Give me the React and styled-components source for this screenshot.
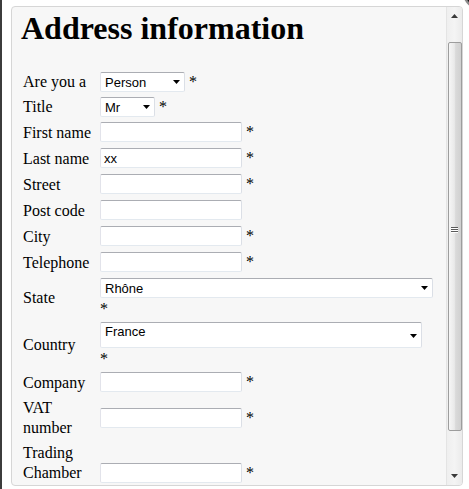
import React from "react";
import styled, { createGlobalStyle } from "styled-components";

const Global = createGlobalStyle`
  html, body {
    margin: 0;
    padding: 0;
    background: #ffffff;
    overflow: hidden;
  }
  body {
    font-family: "Liberation Serif", "Times New Roman", serif;
    color: #000;
  }
`;

const Page = styled.div`
  position: relative;
  width: 469px;
  height: 489px;
  box-sizing: border-box;
  border-left: 2px solid #3c3c3c;
  padding: 6px 0 0 9px;
  overflow: hidden;
`;

const CloseButton = styled.div`
  position: absolute;
  left: 461px;
  top: -25px;
  width: 34px;
  height: 34px;
  box-sizing: border-box;
  border-radius: 50%;
  background: #151515;
  border: 2px solid #8a8a8a;
  box-shadow: 0 0 1px #444;
`;

const Dialog = styled.div`
  display: flex;
  width: 452px;
  height: 480px;
  box-sizing: border-box;
  border: 1px solid #d6d6d6;
  border-radius: 4px;
  background: #f7f7f7;
  overflow: hidden;
`;

const Content = styled.div`
  flex: 1;
  min-width: 0;
  padding: 3px 0 0 9px;
  overflow: hidden;
`;

const Heading = styled.h1`
  margin: 0 0 25px;
  font-size: 32px;
  line-height: 37px;
  font-weight: bold;
  white-space: nowrap;
`;

const Form = styled.div`
  display: flex;
  flex-direction: column;
  gap: 5px;
  padding-left: 2px;
`;

const Row = styled.div`
  display: grid;
  grid-template-columns: 77px 1fr;
  align-items: center;
`;

const Label = styled.div`
  font-size: 16px;
  line-height: 20px;
`;

const Value = styled.div`
  display: flex;
  flex-direction: ${(p) => (p.$stacked ? "column" : "row")};
  align-items: flex-start;
`;

const Required = styled.span`
  font-size: 16px;
  line-height: ${(p) => (p.$below ? "17px" : "16px")};
  margin-top: 2px;
  margin-left: ${(p) => (p.$below ? "0" : "4px")};
`;

const fieldBorder = `
  border: 1px solid;
  border-color: #abadb3 #dbdfe6 #e3e9ef #e2e3ea;
  border-radius: 2px;
  background: #ffffff;
  font-family: "Liberation Sans", Arial, sans-serif;
  font-size: 13px;
  color: #000;
`;

const TextBox = styled.input`
  ${fieldBorder}
  width: 142px;
  height: 20px;
  box-sizing: border-box;
  margin: 0 0 1px;
  padding: 0 3px;
  outline: none;
`;

const SelectBox = styled.div`
  ${fieldBorder}
  display: flex;
  align-items: ${(p) => (p.$tall ? "flex-start" : "center")};
  width: ${(p) => p.$width}px;
  height: ${(p) => (p.$tall ? 26 : 20)}px;
  box-sizing: border-box;
  padding: ${(p) => (p.$tall ? "1px" : "0")} 4px 0 4px;
  line-height: 15px;
`;

const SelectText = styled.span`
  flex: 1;
  white-space: nowrap;
  overflow: hidden;
`;

const Arrow = styled.svg`
  align-self: center;
  flex: none;
  width: 7px;
  height: 4px;
`;

const ScrollBar = styled.div`
  display: flex;
  flex-direction: column;
  align-items: center;
  width: 16px;
  flex: none;
  box-sizing: border-box;
  border-left: 1px solid #e4e4e4;
  background: linear-gradient(to right, #efefef, #f4f4f4 50%, #ebebeb);
`;

const ScrollArrow = styled.div`
  height: 35px;
  display: flex;
  align-items: ${(p) => (p.$down ? "flex-end" : "flex-start")};
  padding: ${(p) => (p.$down ? "0 0 7px" : "7px 0 0")};
  box-sizing: border-box;
`;

const Thumb = styled.div`
  flex: 1;
  width: 14px;
  margin: 0 0 19px;
  box-sizing: border-box;
  border: 1px solid #9d9d9d;
  border-radius: 2px;
  background: linear-gradient(to right, #f6f6f6, #e9e9e9 45%, #dadada 55%, #d0d0d0);
  display: flex;
  align-items: center;
  justify-content: center;
`;

const Grip = styled.div`
  display: flex;
  flex-direction: column;
  gap: 1px;
  margin-bottom: 14px;
  & > span {
    display: block;
    width: 7px;
    height: 1px;
    background: #5a5a5a;
    box-shadow: 0 1px 0 #ffffff;
  }
`;

function DownArrow() {
  return (
    <Arrow viewBox="0 0 7 4">
      <polygon points="0,0 7,0 3.5,4" fill="#000" />
    </Arrow>
  );
}

function Select({ width, value, tall }) {
  return (
    <SelectBox $width={width} $tall={tall}>
      <SelectText>{value}</SelectText>
      <DownArrow />
    </SelectBox>
  );
}

function Star({ below }) {
  return <Required $below={below}>*</Required>;
}

const textFields = [
  { label: "First name", value: "", required: true },
  { label: "Last name", value: "xx", required: true },
  { label: "Street", value: "", required: true },
  { label: "Post code", value: "", required: false },
  { label: "City", value: "", required: true },
  { label: "Telephone", value: "", required: true },
];

function TextRow({ label, value, required }) {
  return (
    <Row>
      <Label>{label}</Label>
      <Value>
        <TextBox defaultValue={value} readOnly />
        {required && <Star />}
      </Value>
    </Row>
  );
}

export default function App() {
  return (
    <>
      <Global />
      <Page>
        <Dialog>
          <Content>
            <Heading>Address information</Heading>
            <Form>
              <Row>
                <Label>Are you a</Label>
                <Value>
                  <Select width={85} value="Person" />
                  <Star />
                </Value>
              </Row>
              <Row>
                <Label>Title</Label>
                <Value>
                  <Select width={55} value="Mr" />
                  <Star />
                </Value>
              </Row>
              {textFields.map((f) => (
                <TextRow key={f.label} {...f} />
              ))}
              <Row>
                <Label>State</Label>
                <Value $stacked>
                  <Select width={333} value="Rhône" />
                  <Star below />
                </Value>
              </Row>
              <Row>
                <Label>Country</Label>
                <Value $stacked>
                  <Select width={322} value="France" tall />
                  <Star below />
                </Value>
              </Row>
              <TextRow label="Company" value="" required />
              <TextRow label="VAT number" value="" required />
              <TextRow label="Trading Chamber Number" value="" required />
            </Form>
          </Content>
          <ScrollBar>
            <ScrollArrow>
              <svg width="7" height="4" viewBox="0 0 7 4">
                <polygon points="0,4 7,4 3.5,0" fill="#3a3a3a" />
              </svg>
            </ScrollArrow>
            <Thumb>
              <Grip>
                <span />
                <span />
                <span />
              </Grip>
            </Thumb>
            <ScrollArrow $down>
              <svg width="7" height="4" viewBox="0 0 7 4">
                <polygon points="0,0 7,0 3.5,4" fill="#3a3a3a" />
              </svg>
            </ScrollArrow>
          </ScrollBar>
        </Dialog>
        <CloseButton />
      </Page>
    </>
  );
}
